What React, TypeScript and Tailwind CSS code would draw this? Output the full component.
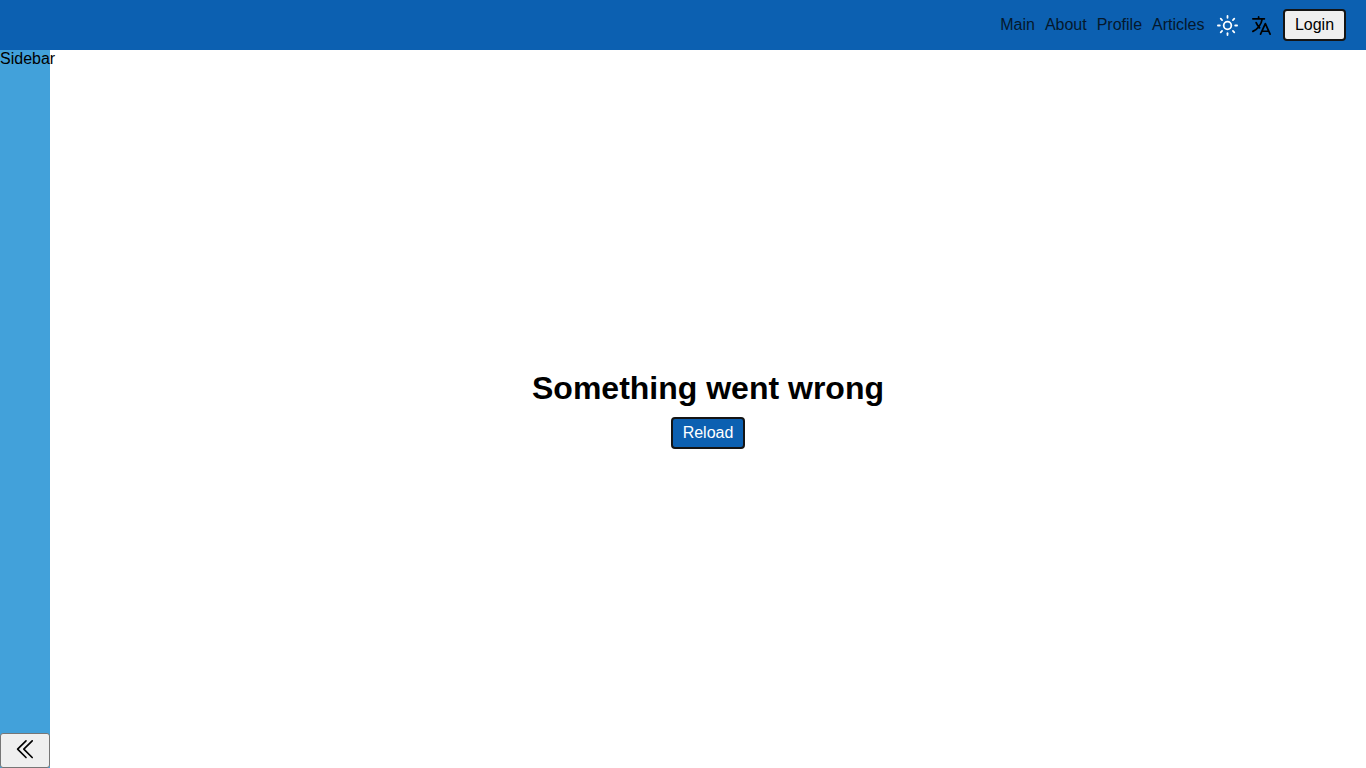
import { LuSun } from "react-icons/lu";

const links = ["Main", "About", "Profile", "Articles"];

function TranslateIcon() {
  return (
    <svg viewBox="0 0 24 24" className="size-[23px]" fill="none" stroke="currentColor" strokeWidth="1.8" strokeLinecap="round" strokeLinejoin="round">
      <path d="M3 5h12M9 3v2m1.048 9.5A18.022 18.022 0 016.412 9m6.088 9h7M11 21l5-11 5 11M12.751 5C11.783 10.77 8.07 15.61 3 18.129" />
    </svg>
  );
}

function DoubleChevronIcon() {
  return (
    <svg viewBox="0 0 20 20" className="size-5" fill="none" stroke="currentColor" strokeWidth="1.65" strokeLinecap="round" strokeLinejoin="round">
      <path d="M11 1.9 2.6 10.2 11 18.5" />
      <path d="M17.2 1.9 8.8 10.2 17.2 18.5" />
    </svg>
  );
}

function Navbar() {
  return (
    <header className="flex h-[50px] shrink-0 items-center justify-end bg-[#0c60b1] pr-5">
      <nav className="mr-[0.5px] flex gap-[10px] text-[#05182c]">
        {links.map((link) => (
          <a key={link} href="#" className="leading-[18px]">{link}</a>
        ))}
      </nav>
      <button aria-label="Theme" className="mt-px ml-[11px] text-white">
        <LuSun className="size-[23px]" strokeWidth={1.85} />
      </button>
      <button aria-label="Language" className="mt-px ml-[11px] text-black">
        <TranslateIcon />
      </button>
      <button className="ml-[10px] h-8 w-[63px] rounded-[4px] border-2 border-[#141414] bg-[#efefef] leading-[18px]">
        Login
      </button>
    </header>
  );
}

function Sidebar() {
  return (
    <aside className="flex w-[50px] shrink-0 flex-col justify-between bg-[#42a1da]">
      <span className="leading-[18px]">Sidebar</span>
      <button aria-label="Collapse" className="flex h-[35px] w-[50px] items-center justify-center rounded-[3px] border border-[#767676] bg-[#efefef] pb-[3px]">
        <DoubleChevronIcon />
      </button>
    </aside>
  );
}

export default function App() {
  return (
    <div className="flex h-screen flex-col overflow-hidden bg-white font-['Liberation_Sans',Arial,sans-serif] text-base text-black">
      <Navbar />
      <div className="flex min-h-0 flex-1">
        <Sidebar />
        <main className="flex flex-1 flex-col items-center justify-center gap-[10px]">
          <h1 className="text-[32px] leading-[38px] font-bold">Something went wrong</h1>
          <button className="h-8 w-[74px] rounded-[4px] border-2 border-[#141414] bg-[#0c60b1] leading-[18px] text-white">
            Reload
          </button>
        </main>
      </div>
    </div>
  );
}
